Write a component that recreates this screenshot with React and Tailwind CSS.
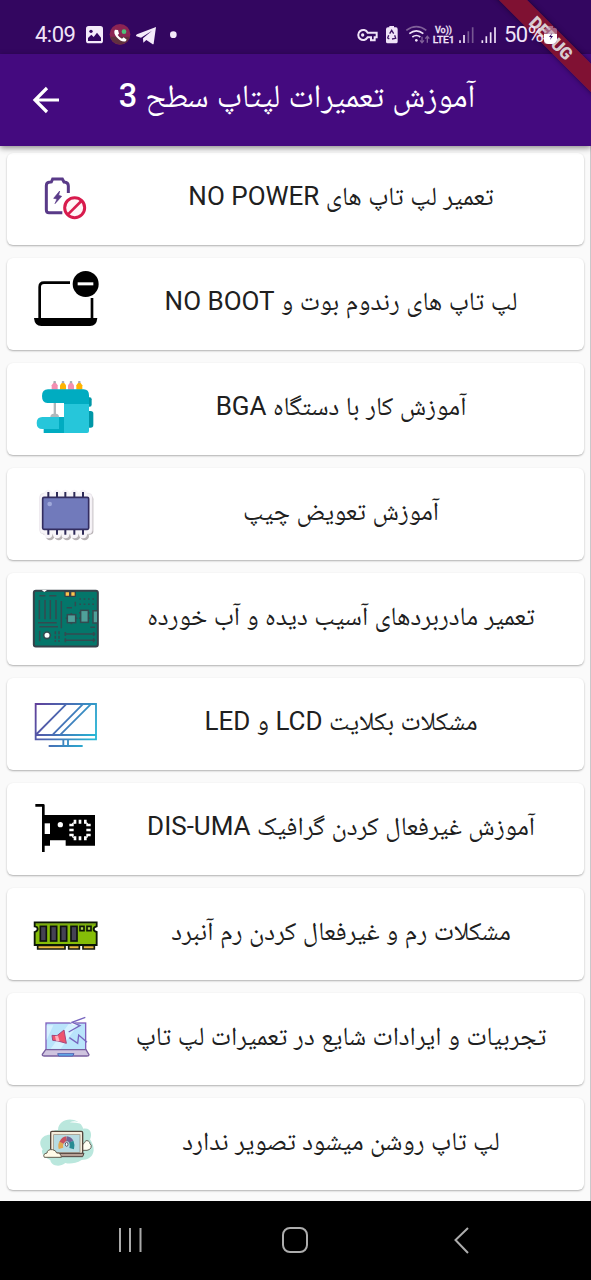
import React from "react";

const Svg = ({ y = 9, children }) => (
  <svg className="h-[92px] w-20 shrink-0" viewBox={`81 ${y} 240 276`} fill="none">
    {children}
  </svg>
);

const NoPower = () => (
  <Svg>
    <path d="M187 188H147Q139 188 139 179V107Q139 98 147 97L154 96L158 87H187L192 96Q205 97 205 108V129" stroke="#593a88" strokeWidth="9" />
    <path d="M179 123L161 145L171 147L165 161L185 139L176 136Z" fill="#593a88" stroke="#593a88" strokeWidth="2" />
    <circle cx="224" cy="173" r="30" stroke="#d81b4d" strokeWidth="9" fill="#fff5f7" />
    <path d="M204 193L244 153" stroke="#d81b4d" strokeWidth="8" />
  </Svg>
);
const NoBoot = () => (
  <Svg y={324}>
    <path d="M210 398H132Q119 398 119 411V506M276 444V506" stroke="#000" strokeWidth="8" />
    <path d="M102 504H292Q290 528 270 528H124Q104 528 102 504Z" fill="#000" />
    <circle cx="257" cy="402" r="39" fill="#000" />
    <rect x="233" y="397" width="47" height="9" fill="#fff" />
  </Svg>
);
const Sewing = () => (
  <Svg>
    {[["#f48fb1", 164], ["#ffb300", 189], ["#f48fb1", 213], ["#ffb300", 238]].map(([c, x]) => (
      <g key={x}>
        <path d={`M${x - 4} 69H${x + 4}L${x + 9} 76V89H${x - 9}V76Z`} fill={c} />
        <rect x={x - 4} y="63" width="8" height="7" rx="3" fill="#a9a9b0" />
      </g>
    ))}
    <rect x="260" y="112" width="15" height="28" rx="6" fill="#0097a7" />
    <rect x="260" y="153" width="20" height="50" rx="8" fill="#0097a7" />
    <path d="M161 128H168V161Q177 162 177 171H151Q151 162 161 161Z" fill="#b0b8bc" />
    <path d="M192 125H267V213Q267 219 261 219H192Z" fill="#26c6da" />
    <path d="M144 88H251Q267 88 267 106V132H192V129H142Q126 129 126 108Q126 88 144 88Z" fill="#00acc1" />
    <path d="M131 171H192V219H131Z" fill="#00acc1" />
    <path d="M127 171H177V207H127Q110 207 110 189Q110 171 127 171Z" fill="#26c6da" />
  </Svg>
);
const chipPins = [145, 171, 196, 223, 249];
const Chip = () => (
  <Svg y={324}>
    <g fill="#b7b1b4" transform="translate(5 5)">
      <rect x="119" y="403" width="156" height="116" rx="10" />
      {chipPins.map((x) => <circle key={x} cx={x} cy="523" r="13" />)}
    </g>
    <g fill="#f7f4f8">
      <rect x="119" y="400" width="158" height="122" rx="12" stroke="#e4dfe5" strokeWidth="2" />
      {chipPins.map((x) => <g key={x}><circle cx={x} cy="402" r="13" /><circle cx={x} cy="523" r="12" /></g>)}
    </g>
    {chipPins.map((x) => <path key={x} d={`M${x} 396V412M${x} 509V524`} stroke="#2f2b58" strokeWidth="6" />)}
    <rect x="128" y="412" width="138" height="96" rx="4" fill="#717abb" stroke="#332d60" strokeWidth="5" />
    <circle cx="149" cy="432" r="7" fill="#9fa8da" />
  </Svg>
);
const Board = () => (
  <Svg>
    <rect x="101.500" y="62.500" width="192" height="167" rx="6" fill="#04766a" stroke="#37414a" strokeWidth="6" />
    <path d="M125 60L133 66L141 60Z" fill="#fff" />
    <rect x="193" y="62" width="35" height="19" rx="4" fill="#34414a" />
    <path d="M197 67H207V77H197ZM214 67H224V77H214Z" fill="#ffc34d" />
    <g stroke="#344a50" strokeWidth="4.500">
      <path d="M118 77H136M148 77H169M118 90V148M135 90V148M151 90V148M168 90V148M184 93V175M114 158H170M118 170H174M200 113H216M226 95V109M119 182V214M271 172H285" />
      <path d="M238 87H286M238 103H286" strokeDasharray="5 8" />
      <path d="M166 184V216M177 184V216" strokeDasharray="9 4" />
      <path d="M194 192H286M194 211H286" />
      <path d="M196 186V198M281 186V198M196 205V217M281 205V217" />
      <rect x="202" y="134" width="25" height="24" fill="#4fa09a" />
      <rect x="242" y="121" width="23" height="36" fill="#4fa09a" />
      <path d="M291 122H279V159H291" fill="#4fa09a" />
      <path d="M197 145H202M227 145H232M214 129V134M214 158V163M237 128H242M237 145H242M265 128H269M265 145H269" />
    </g>
    <circle cx="141" cy="196" r="10" fill="#fff" stroke="#334a50" strokeWidth="5" />
  </Svg>
);
const Monitor = () => (
  <Svg y={324}>
    <defs>
      <linearGradient id="monitorInk" gradientUnits="userSpaceOnUse" x1="105" y1="410" x2="285" y2="500">
        <stop stopColor="#60409a" />
        <stop offset=".5" stopColor="#4475b8" />
        <stop offset="1" stopColor="#25b6d5" />
      </linearGradient>
    </defs>
    <path d="M107 402H288V508H107ZM107 495H288M110 492L198 403M159 493L248 403M182 493L272 403M190 509V527M204 509V527M146 528H248" stroke="url(#monitorInk)" strokeWidth="5.500" />
  </Svg>
);
const Gpu = () => (
  <Svg>
    <path d="M106 76H130V216" stroke="#000" strokeWidth="8" strokeLinejoin="round" />
    <path d="M130 105H285V197H197V181H150V197H130Z" fill="#000" />
    <rect x="134" y="130" width="16" height="32" fill="#fff" />
    <circle cx="181" cy="134" r="8" fill="#fff" />
    <path d="M225 119V131M240 119V131M256 119V131M225 169V181M240 169V181M256 169V181M208 135H221M208 150H221M208 165H221M259 135H272M259 150H272M259 165H272" stroke="#fff" strokeWidth="8" />
    <path d="M218 137V129H225M262 137V129H256M218 163V172H225M262 163V172H256" stroke="#fff" strokeWidth="3" />
  </Svg>
);
const Ram = () => (
  <Svg y={324}>
    <path d="M113 496H195V507H113ZM206 496H238V507H206ZM249 496H283V507H249Z" fill="#e9b83f" stroke="#15180e" strokeWidth="5" />
    <path d="M104 427H290V439Q281 441 281 447Q281 454 290 456V495H104V456Q113 453 113 447Q113 440 104 439Z" fill="#85bd08" stroke="#0c1707" strokeWidth="5.500" />
    <path d="M108 431H287" stroke="#61831a" strokeWidth="4" />
    {[121, 152, 182, 213].map((x) => <rect key={x} x={x} y="439" width="18" height="44" fill="#454254" stroke="#0e1110" strokeWidth="5" />)}
    <path d="M240 439H252V452H240ZM261 439H273V452H261Z" fill="#b0d650" stroke="#0e1708" strokeWidth="5" />
  </Svg>
);
const LaptopHorn = () => (
  <Svg>
    <rect x="138" y="99" width="119" height="80" fill="#b9e4fb" stroke="#8060bd" strokeWidth="4" />
    <path d="M160 106L140 150V106ZM206 102L152 176H182L236 102Z" fill="#d5f1ff" />
    <path d="M137 179H258L267 194Q267 198 261 198H133Q126 198 127 193Z" fill="#cfc4df" stroke="#785e9e" strokeWidth="4" />
    <path d="M173 191H222L218 198H176Z" fill="#64b2ef" stroke="#5264b2" strokeWidth="3" />
    <path d="M156 136L171 137L192 120L199 160L174 153L158 151Z" fill="#ee536c" stroke="#a4467c" strokeWidth="3" />
    <path d="M165 138L174 137L179 154L168 152Z" fill="#ffafbd" />
    <path d="M208 95L240 88L222 98L236 103L220 105Z" fill="#fff" />
    <path d="M256 82L216 97L240 107L206 126M208 143L233 160L236 135L261 157" stroke="#7765bf" strokeWidth="4" />
  </Svg>
);
const LaptopCloud = () => (
  <Svg y={324}>
    <path d="M174 420C175 381 236 377 250 416C276 412 276 438 270 448C292 480 280 510 245 510C226 522 207 522 196 519C174 536 151 523 151 510C129 502 122 487 128 478C110 452 130 433 151 434C151 426 162 418 174 420Z" fill="#bae7dd" />
    <path d="M209 397Q229 388 247 402Q227 397 209 397Z" fill="#fff" />
    <path d="M246 477Q246 461 254 458Q256 449 265 453Q271 457 270 461Q276 465 273 473Q270 480 261 481H246Z" fill="#fffdf2" stroke="#626158" strokeWidth="3" />
    <rect x="152" y="424" width="96" height="67" rx="4" fill="#f4ecdc" stroke="#55473e" strokeWidth="4" />
    <rect x="161" y="434" width="79" height="53" fill="#b7dbe2" stroke="#918575" strokeWidth="2" />
    <path d="M166 490H252L248 500H169Z" fill="#b7a197" stroke="#51443f" strokeWidth="3" />
    <g strokeWidth="14">
      <path d="M183 475Q180 464 185 457" stroke="#e2a750" />
      <path d="M185 458Q190 447 200 446" stroke="#c7505e" />
      <path d="M200 446Q209 447 214 455" stroke="#716394" />
      <path d="M214 455Q218 464 215 476" stroke="#278a93" />
    </g>
    <ellipse cx="200" cy="463" rx="4" ry="6" fill="#fff" stroke="#565267" strokeWidth="3" />
    <path d="M133 502Q127 492 141 489Q142 477 158 479Q168 481 170 489Q183 488 184 502Z" fill="#fffbe9" stroke="#655f51" strokeWidth="3" />
  </Svg>
);

const lessons = [
  [NoPower, "تعمیر لپ تاپ های NO POWER"],
  [NoBoot, "لپ تاپ های رندوم بوت و NO BOOT"],
  [Sewing, "آموزش کار با دستگاه BGA"],
  [Chip, "آموزش تعویض چیپ"],
  [Board, "تعمیر مادربردهای آسیب دیده و آب خورده"],
  [Monitor, "مشکلات بکلایت LCD و LED"],
  [Gpu, "آموزش غیرفعال کردن گرافیک DIS-UMA"],
  [Ram, "مشکلات رم و غیرفعال کردن رم آنبرد"],
  [LaptopHorn, "تجربیات و ایرادات شایع در تعمیرات لپ تاپ"],
  [LaptopCloud, "لپ تاپ روشن میشود تصویر ندارد"],
];

function StatusBar() {
  return (
    <div className="relative z-30 flex h-[54px] shrink-0 items-center pt-4 pl-[35px] text-[22px] leading-none text-[#f0e4f8]">
      <span className="w-[42px] tracking-[-0.5px]">4:09</span>
      <svg className="ml-2 h-6 w-[100px]" viewBox="255 69 300 72" fill="none">
        <path fillRule="evenodd" d="M266 78H301Q309 78 309 86V122Q309 130 301 130H266Q258 130 258 122V86Q258 78 266 78ZM264 123H303V113L291 98L281 111L274 104L264 114Z" fill="#f4eafa" />
        <circle cx="273" cy="94" r="5" fill="#330660" />
        <circle cx="360" cy="103" r="31" fill="#8c2453" />
        <path d="M330 110A31 31 0 0 0 390 110Z" fill="#60303f" />
        <path d="M345 89L354 90L357 101L353 105Q358 113 366 116L371 112L380 119L377 124Q363 127 350 112Q339 98 345 89Z" fill="#fff" />
        <circle cx="372" cy="95" r="7" fill="#4fc078" />
        <path d="M468 81L461 131Q460 134 456 131L439 120L430 128L429 115L456 92L423 113L409 109Q406 106 411 103Z" fill="#f4eafa" />
        <circle cx="520" cy="104" r="10" fill="#f4eafa" />
      </svg>
      <svg className="ml-[171px] h-6 w-[142px]" viewBox="168 69 426 72" fill="none">
        <g stroke="#f0e3f8" strokeWidth="6">
          <path d="M203 98H230V112H224V121H213V112H203A15 15 0 1 1 203 98Z" />
          <circle cx="188" cy="105" r="3" fill="#f0e3f8" strokeWidth="4" />
        </g>
        <path d="M264 82H268V78H282V82H288Q293 82 293 88V125Q293 130 288 130H263Q258 130 258 125V88Q258 82 264 82Z" fill="#f0e3f8" />
        <path d="M269 101L275 91L281 101M284 106L287 115L276 117M268 117L263 114L266 106" stroke="#401866" strokeWidth="4" />
        <path d="M319 91Q349 69 379 91" stroke="#806099" strokeWidth="5" />
        <path d="M328 101Q349 84 370 101M337 111Q349 102 361 111" stroke="#f0e3f8" strokeWidth="5" />
        <circle cx="349" cy="121" r="4" fill="#f0e3f8" />
        <path d="M366 110V127M360 121L366 128L372 121M382 128V110M376 116L382 109L388 116" stroke="#806099" strokeWidth="4" />
        <g fill="#f0e3f8" stroke="#f0e3f8" strokeWidth=".8" fontFamily="Roboto, sans-serif" fontWeight="500">
          <text x="405" y="100" fontSize="26" textLength="51" lengthAdjust="spacingAndGlyphs">Vo))</text>
          <text x="398" y="130" fontSize="29" textLength="66" lengthAdjust="spacingAndGlyphs">LTE1</text>
        </g>
        <path d="M480 121V129M492 105V129M547 121V129M559 109V129M572 97V129M585 82V129" stroke="#f0e3f8" strokeWidth="5" />
        <path d="M505 94V129M518 82V129" stroke="#765791" strokeWidth="5" />
      </svg>
      <span className="ml-[6px] tracking-[-0.5px]">50%</span>
      <svg className="ml-px h-[18px] w-[13px]" viewBox="0 0 13 18">
        <path d="M4 0H9V2H11Q13 2 13 4V16Q13 18 11 18H2Q0 18 0 16V4Q0 2 4 2Z" fill="#c09bb5" fillOpacity=".6" />
        <path d="M0 8H13V14Q11 18 8 18H4Q0 17 0 14Z" fill="#fff" />
        <path d="M8 7L5 11H7L6 14L9 10H7Z" fill="#330660" />
      </svg>
    </div>
  );
}

export default function App() {
  return (
    <div className="relative flex h-[1280px] w-[591px] flex-col overflow-hidden bg-[#fafafa] font-[Roboto,'Noto_Naskh_Arabic','Noto_Sans_Arabic','DejaVu_Sans',sans-serif]">
      <div className="shrink-0 bg-[#330660]">
        <StatusBar />
      </div>
      <header className="z-10 flex h-[92px] shrink-0 items-center bg-[#440a7f] pl-[32px] text-white shadow-[0_2px_6px_rgba(0,0,0,0.45)]">
        <svg className="h-7 w-7" viewBox="0 0 28 28" fill="none" stroke="white" strokeWidth="3.200">
          <path d="M27 14H3M15 2L3 14L15 26" />
        </svg>
        <h1 dir="rtl" className="ml-[59px] flex w-[356px] justify-center pb-2 text-[32.5px] leading-none font-normal whitespace-nowrap">
          <span>آموزش تعمیرات لپتاپ سطح <span className="font-medium">3</span></span>
        </h1>
      </header>
      <main className="flex h-[1055px] shrink-0 flex-col gap-[13px] border-r border-[#c9c9cb] pt-[7px] pr-[6px] pl-[7px]">
        {lessons.map(([Icon, title], i) => (
          <article key={i} className="flex h-[92px] shrink-0 items-center rounded-[6px] bg-white pl-5 shadow-[0_1px_2px_rgba(0,0,0,0.3)]">
            <Icon />
            <h2 dir="rtl" className="flex w-[468px] justify-center pb-[7px] text-[26px] leading-none whitespace-nowrap text-[#202020]">
              <span>{title}</span>
            </h2>
          </article>
        ))}
      </main>
      <nav className="flex h-[79px] shrink-0 items-center justify-between bg-black pr-[117px] pb-0.5 pl-[116px]">
        <svg className="h-7 w-7" viewBox="0 0 28 28" stroke="#a9a9a9" strokeWidth="2"><path d="M4 2V26M14 2V26M24.500 2V26" /></svg>
        <svg className="h-7 w-7" viewBox="0 0 28 28" fill="none" stroke="#adadad" strokeWidth="2"><rect x="2" y="2" width="24" height="24" rx="7" /></svg>
        <svg className="h-7 w-7" viewBox="0 0 28 28" fill="none" stroke="#adadad" strokeWidth="2"><path d="M22 2L9.500 14L22 27" /></svg>
      </nav>
      <div className="absolute top-[28px] left-[471px] z-20 flex h-5 w-40 rotate-45 items-center justify-center bg-[#84122f]/95 text-[17px] leading-none font-black tracking-[-0.3px] text-[#d8ccd0] shadow-[0_0_5px_rgba(0,0,0,0.5)]">
        DEBUG
      </div>
    </div>
  );
}
